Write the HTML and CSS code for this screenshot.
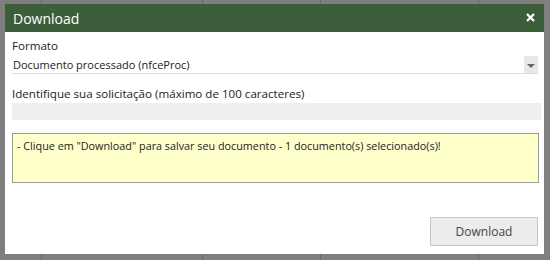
FILE: index.html
```html
<!DOCTYPE html>
<html lang="pt-BR">
<head>
    <meta charset="UTF-8">
    <title>Download</title>
    <link rel="stylesheet" href="styles.css">
</head>
<body>
    <div class="grid">
        <div class="grid-row">
            <span class="c1"></span><span class="c2"></span><span class="c3"></span><span class="c4"></span><span class="c5"></span>
        </div>
        <div class="grid-row last">
            <span class="c1"></span><span class="c2">000001977</span><span class="c3">Normal</span><span class="c4">387912</span><span class="c5">Autorizada</span>
        </div>
    </div>

    <div class="backdrop">
        <div class="dialog">
            <header class="dialog-head">
                <h1>Download</h1>
                <span class="close" title="Fechar">
                    <svg width="9" height="9" viewBox="0 0 9 9"><path d="M1 1L8 8M8 1L1 8" stroke="#fff" stroke-width="2.2"/></svg>
                </span>
            </header>

            <main class="dialog-body">
                <label class="field-label">Formato</label>
                <div class="select">
                    <span>Documento processado (nfceProc)</span>
                    <span class="select-arrow"></span>
                </div>

                <label class="field-label second">Identifique sua solicitação (máximo de 100 caracteres)</label>
                <div class="text-input"></div>

                <div class="note">- Clique em "Download" para salvar seu documento - 1 documento(s) selecionado(s)!</div>
            </main>

            <footer class="dialog-foot">
                <button class="btn">Download</button>
            </footer>
        </div>
    </div>
</body>
</html>
```

FILE: styles.css
```css
body {
    margin: 0;
    font-family: "Open Sans", "Noto Sans", sans-serif;
    background: #fff;
    position: relative;
    height: 260px;
    overflow: hidden;
}

.grid {
    display: flex;
    flex-direction: column;
    height: 260px;
}

.grid-row {
    display: flex;
    height: 254px;
}

.grid-row.last {
    height: 6px;
    overflow: hidden;
}

.grid-row span {
    border-right: 1px solid #d4d4d4;
    padding: 3px 6px 0;
    font-size: 11px;
    line-height: 14px;
    color: #000;
    box-sizing: border-box;
}

.c1 { width: 42px; }
.c2 { width: 161px; }
.c3 { width: 118px; }
.c4 { width: 158px; }
.c5 { flex: 1; border-right: none !important; }

.backdrop {
    position: absolute;
    inset: 0;
    background: rgba(0, 0, 0, 0.5);
    padding: 4px 0 0 5px;
}

.dialog {
    width: 539px;
    height: 250px;
    background: #fff;
    display: flex;
    flex-direction: column;
}

.dialog-head {
    height: 28px;
    background: #3c5e3a;
    color: #fff;
    display: flex;
    align-items: center;
    justify-content: space-between;
    padding: 0 9px 0 8px;
}

.dialog-head h1 {
    margin: 0;
    font-size: 14px;
    font-weight: normal;
}

.close {
    display: flex;
    margin-top: -1px;
}

.dialog-body {
    flex: 1;
    padding: 6px 3px 0 7px;
    display: flex;
    flex-direction: column;
}

.field-label {
    font-size: 11.6px;
    color: #222;
    line-height: 16px;
}

.field-label.second {
    margin-top: 12px;
}

.select {
    height: 17px;
    margin-top: 2px;
    margin-right: 3px;
    border-bottom: 1px solid #ddd;
    display: flex;
    align-items: center;
    justify-content: space-between;
    font-size: 11px;
    color: #222;
    padding-left: 1px;
}

.select-arrow {
    width: 14px;
    height: 17px;
    background: #e8e8e8;
    position: relative;
    align-self: flex-start;
}

.select-arrow::after {
    content: "";
    position: absolute;
    left: 3px;
    top: 8px;
    border-left: 4px solid transparent;
    border-right: 4px solid transparent;
    border-top: 4px solid #666;
}

.text-input {
    height: 17px;
    margin-top: 1px;
    background: #efefef;
}

.note {
    margin-top: 13px;
    margin-right: 2px;
    height: 50px;
    box-sizing: border-box;
    background: #ffffcc;
    border: 1px solid #9a9a9a;
    padding: 4px 4px;
    font-size: 10.8px;
    color: #222;
}

.dialog-foot {
    display: flex;
    justify-content: flex-end;
    padding: 0 6px 8px 0;
}

.btn {
    width: 108px;
    height: 29px;
    background: #ececec;
    border: 1px solid #c6c6c6;
    font-family: inherit;
    font-size: 12px;
    color: #444;
}
```
